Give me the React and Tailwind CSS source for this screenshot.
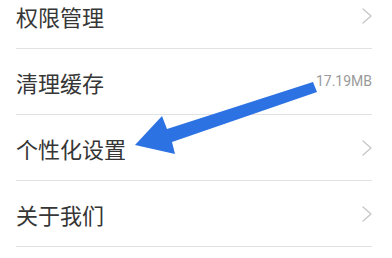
const rows = [
  { label: '权限管理' },
  { label: '清理缓存', value: '17.19MB' },
  { label: '个性化设置' },
  { label: '关于我们' },
];

function Chevron() {
  return (
    <svg width="10" height="16" viewBox="0 0 10 16" fill="none">
      <path d="M1 1l8 7-8 7" stroke="#c6c6c6" strokeWidth="1.3" strokeLinecap="round" strokeLinejoin="round" />
    </svg>
  );
}

function Arrow() {
  return (
    <svg className="absolute left-0 top-0 pointer-events-none" width="392" height="258" viewBox="0 0 392 258">
      <polygon
        points="135,145 162,116 167,129 313,82 317,92 172,142 175,154"
        fill="#2d72e3"
      />
    </svg>
  );
}

export default function App() {
  return (
    <div className="relative w-[392px] h-[258px] overflow-hidden bg-white" style={{ fontFamily: '"Noto Sans CJK SC", Roboto, sans-serif' }}>
      <div className="-mt-[17px] pl-4 pr-5">
        {rows.map((row) => (
          <div key={row.label} className="h-[66px] flex items-center justify-between border-b border-[#e2e2e2]">
            <span className="text-[22px] leading-none text-[#363636]">{row.label}</span>
            {row.value ? (
              <span className="text-[14px] text-[#9a9a9a] font-['Roboto',sans-serif]">{row.value}</span>
            ) : (
              <Chevron />
            )}
          </div>
        ))}
      </div>
      <Arrow />
    </div>
  );
}
